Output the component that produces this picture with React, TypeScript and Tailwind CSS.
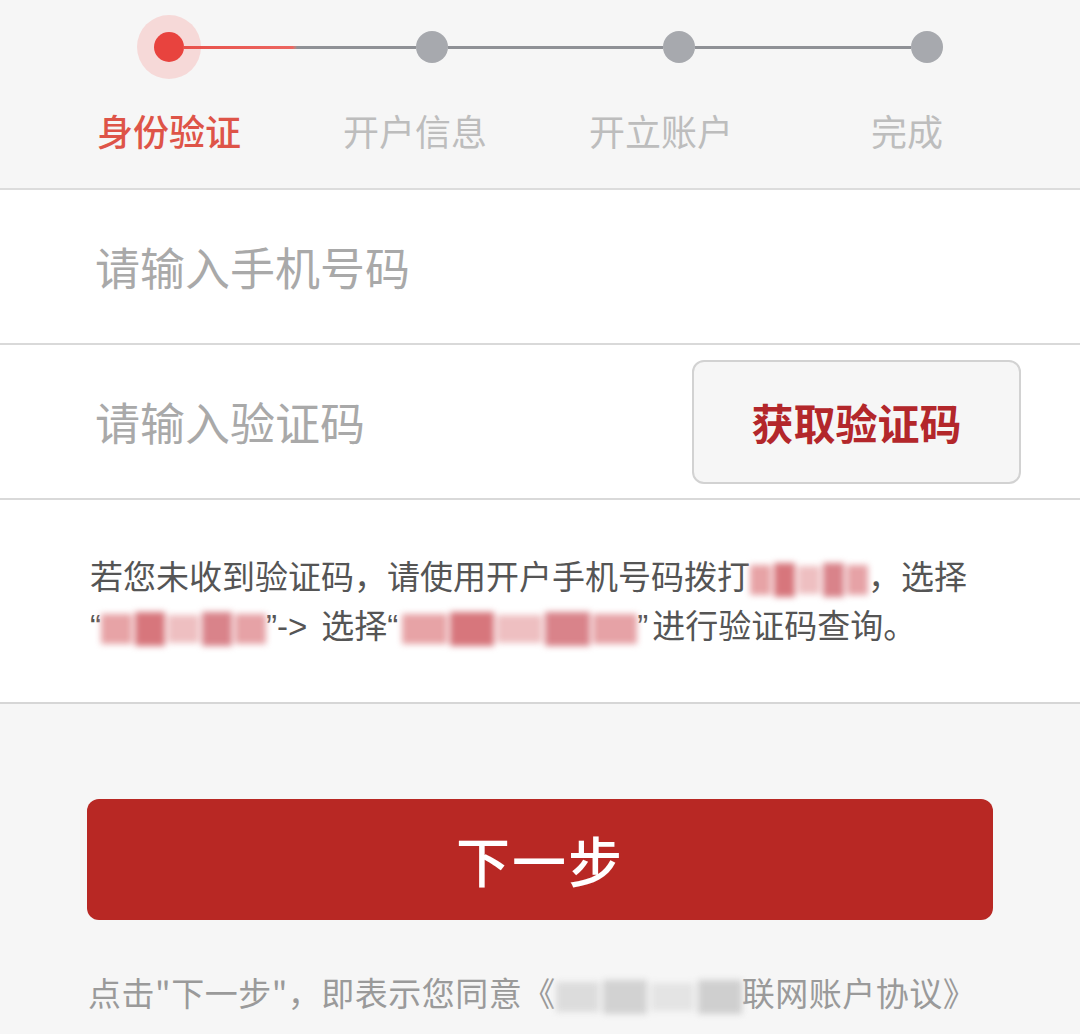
import React from "react";

const font = { fontFamily: '"Noto Sans CJK SC", "Noto Sans", sans-serif' };
const latin = { fontFamily: '"Liberation Sans", sans-serif' };

function Blur({ w }: { w: number }) {
  return (
    <span className="inline-flex items-center align-middle h-[36px] gap-[3px] blur-[3px]" style={{ width: w }}>
      <span className="h-[30px] flex-1 bg-[#e7a3a6]" />
      <span className="h-[34px] flex-1 bg-[#d7767c]" />
      <span className="h-[28px] flex-1 bg-[#eebfc1]" />
      <span className="h-[34px] flex-1 bg-[#d9838a]" />
      <span className="h-[30px] flex-1 bg-[#e6a2a6]" />
    </span>
  );
}

function GrayBlur({ w }: { w: number }) {
  return (
    <span className="inline-flex items-center align-middle h-[36px] gap-[4px] blur-[3px]" style={{ width: w }}>
      <span className="h-[30px] flex-1 bg-[#dcdcdc]" />
      <span className="h-[34px] flex-1 bg-[#d2d2d2]" />
      <span className="h-[28px] flex-1 bg-[#e4e4e4]" />
      <span className="h-[34px] flex-1 bg-[#cfcfcf]" />
    </span>
  );
}

export default function App() {
  return (
    <div className="w-[1080px] h-[1034px] bg-[#f6f6f6] overflow-hidden" style={font}>
      {/* Stepper */}
      <div className="pt-[15px] pb-[33px] border-b-2 border-[#dcdcdc]">
        <div className="flex items-center h-[64px] pl-[137px]">
          <div className="w-[64px] h-[64px] rounded-full bg-[#f6d9d8] flex items-center justify-center shrink-0">
            <div className="w-[30px] h-[30px] rounded-full bg-[#e8433e]" />
          </div>
          <div className="w-[233px] h-[3px] bg-gradient-to-r from-[#e8504a] from-0% via-[#ec6660] via-[47%] to-[#8f9196] to-[49%] -ml-[18px]" />
          <div className="w-[32px] h-[32px] rounded-full bg-[#a7a9ae] shrink-0" />
          <div className="w-[215px] h-[3px] bg-[#8f9196]" />
          <div className="w-[32px] h-[32px] rounded-full bg-[#a7a9ae] shrink-0" />
          <div className="w-[216px] h-[3px] bg-[#8f9196]" />
          <div className="w-[32px] h-[32px] rounded-full bg-[#a7a9ae] shrink-0" />
        </div>
        <div className="flex mt-[26px] pl-[95px] gap-[98px] text-[36px] leading-[50px]">
          <div className="w-[148px] text-center text-[#de5448] font-medium">身份验证</div>
          <div className="w-[148px] text-center text-[#bdbdbd]">开户信息</div>
          <div className="w-[148px] text-center text-[#bdbdbd]">开立账户</div>
          <div className="w-[148px] text-center text-[#bdbdbd]">完成</div>
        </div>
      </div>

      {/* Form */}
      <div className="bg-white">
        <div className="h-[155px] flex items-center pl-[95px] border-b-2 border-[#d9d9d9]">
          <span className="text-[45px] text-[#a9a9a9]">请输入手机号码</span>
        </div>
        <div className="h-[155px] flex items-center justify-between pl-[95px] pr-[59px] border-b-2 border-[#d9d9d9]">
          <span className="text-[45px] text-[#a9a9a9]">请输入验证码</span>
          <div className="w-[329px] h-[124px] rounded-[12px] border-2 border-[#d2d2d2] bg-[#f6f6f6] flex items-center justify-center">
            <span className="text-[42px] font-bold text-[#b3272b]">获取验证码</span>
          </div>
        </div>
        <div className="h-[204px] flex flex-col justify-center pl-[90px] border-b-2 border-[#d6d6d6] text-[33px] leading-[49px] text-[#555555]">
          <div className="whitespace-nowrap">
            若您未收到验证码，请使用开户手机号码拨打<Blur w={118} />，选择
          </div>
          <div className="whitespace-nowrap">
            <span style={latin}>“</span>
            <Blur w={165} />
            <span style={latin} className="mr-[14px]">”-&gt;</span>选择<span style={latin} className="mr-[4px]">“</span>
            <Blur w={235} />
            <span style={latin} className="mr-[4px]">”</span>进行验证码查询。
          </div>
        </div>
      </div>

      {/* Next button */}
      <div className="pt-[95px] pl-[87px]">
        <div className="w-[906px] h-[121px] rounded-[12px] bg-[#b82824] flex items-center justify-center">
          <span className="text-[54px] text-white font-medium tracking-[2px]">下一步</span>
        </div>
      </div>

      <div className="mt-[48px] pl-[88px] text-[33px] leading-[48px] tracking-[0.5px] text-[#9a9a9a] whitespace-nowrap">
        点击"下一步"，即表示您同意《<GrayBlur w={186} />联网账户协议》
      </div>
    </div>
  );
}
